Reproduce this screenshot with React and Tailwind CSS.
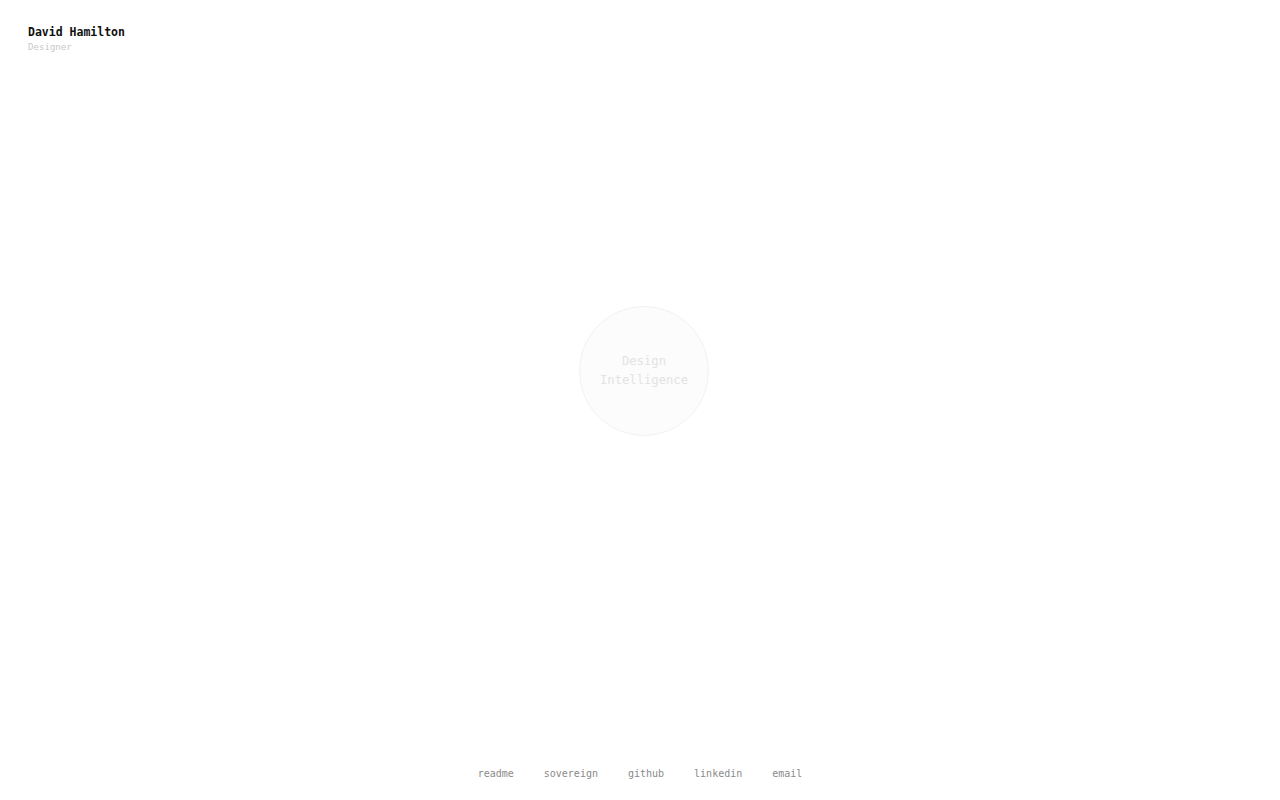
export default function App() {
    const links = ['readme', 'sovereign', 'github', 'linkedin', 'email'];

    return (
        <div
            className="flex h-screen w-full flex-col bg-white"
            style={{ fontFamily: '"DejaVu Sans Mono", "Liberation Mono", monospace' }}
        >
            <header className="px-[28px] pt-[24px]">
                <div className="text-[11.5px] font-bold leading-[16px] text-[#111111]">David Hamilton</div>
                <div className="mt-[1px] text-[9.1px] leading-[13px] text-[#c8c8c8]">Designer</div>
            </header>

            <main className="flex flex-1 items-center justify-center pb-[80px] pl-[8px]">
                <div className="flex h-[130px] w-[130px] flex-col items-center justify-center rounded-full border border-[#f2f2f2] bg-[#fcfcfc] text-center text-[12.2px] leading-[19px] text-[#e3e3e3]">
                    <span>Design</span>
                    <span>Intelligence</span>
                </div>
            </main>

            <footer className="flex items-center justify-center gap-[30px] pb-[19px] text-[10px] leading-[14px] text-[#8a8a8a]">
                {links.map((l) => (
                    <a key={l} href="#" className="hover:text-[#111111]">
                        {l}
                    </a>
                ))}
            </footer>
        </div>
    );
}
